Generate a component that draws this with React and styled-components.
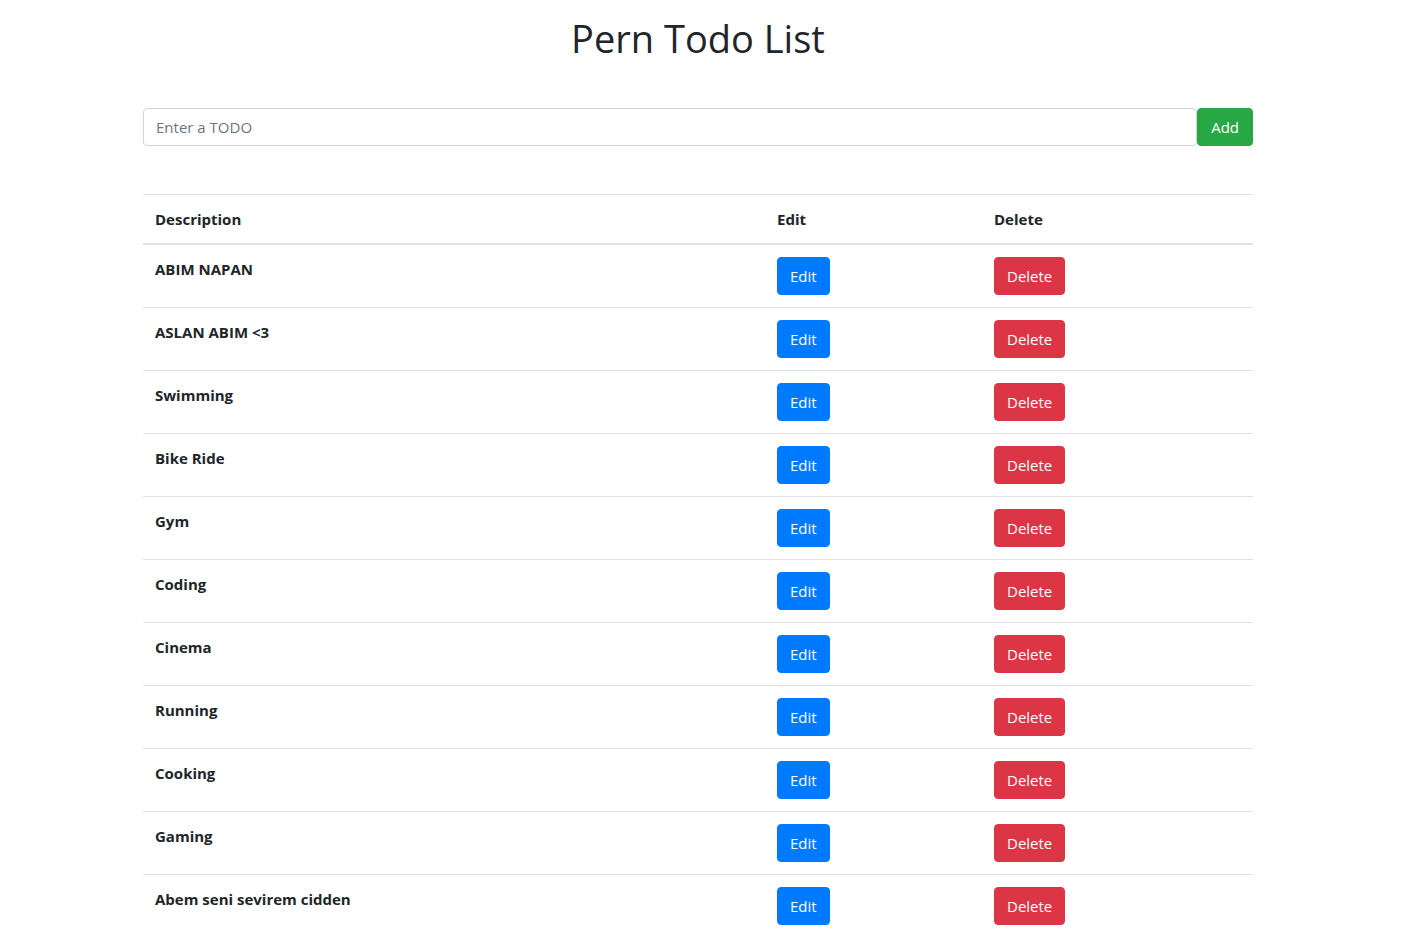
import React from "react";
import styled, { createGlobalStyle } from "styled-components";

const Global = createGlobalStyle`
  html { overflow: hidden; }
  body {
    margin: 0;
    font-family: "Open Sans", "Noto Sans", sans-serif;
    font-size: 15px;
    line-height: 24px;
    color: #212529;
    background: #fff;
  }
  * { box-sizing: border-box; }
`;

const Page = styled.div`
  padding-right: 30px;
`;

const Container = styled.div`
  width: 1110px;
  margin: 0 auto;
`;

const Title = styled.h1`
  margin: 14px 0 0;
  font-size: 38px;
  font-weight: 500;
  line-height: 48px;
  text-align: center;
`;

const Form = styled.form`
  display: flex;
  margin-top: 46px;
`;

const Input = styled.input`
  flex: 1;
  height: 38px;
  padding: 6px 12px;
  font: inherit;
  font-size: 15px;
  color: #495057;
  border: 1px solid #ced4da;
  border-radius: 4px;
  outline: none;
  &::placeholder { color: #6c757d; }
`;

const Button = styled.button`
  height: 38px;
  padding: 6px ${p => p.$px || 12}px;
  font: inherit;
  font-size: 15px;
  line-height: 24px;
  color: #fff;
  background: ${p => p.$bg};
  border: 1px solid ${p => p.$bg};
  border-radius: 4px;
  cursor: pointer;
`;

const Table = styled.table`
  width: 100%;
  margin-top: 48px;
  border-collapse: collapse;
  table-layout: fixed;
`;

const Col = styled.col`
  width: ${p => p.$w}px;
`;

const Th = styled.th`
  padding: 12px;
  text-align: left;
  font-weight: 700;
  border-top: 1px solid #dee2e6;
  border-bottom: 2px solid #dee2e6;
  vertical-align: bottom;
`;

const Td = styled.td`
  padding: 12px;
  vertical-align: top;
  border-top: 1px solid #dee2e6;
  font-weight: ${p => (p.$bold ? 700 : 400)};
`;

const todos = [
  "ABIM NAPAN",
  "ASLAN ABIM <3",
  "Swimming",
  "Bike Ride",
  "Gym",
  "Coding",
  "Cinema",
  "Running",
  "Cooking",
  "Gaming",
  "Abem seni sevirem cidden",
];

export default function App() {
  return (
    <Page>
      <Global />
      <Container>
        <Title>Pern Todo List</Title>
        <Form onSubmit={e => e.preventDefault()}>
          <Input placeholder="Enter a TODO" />
          <Button $bg="#28a745" $px={13}>Add</Button>
        </Form>
        <Table>
          <colgroup>
            <Col $w={622} />
            <Col $w={217} />
            <Col $w={271} />
          </colgroup>
          <thead>
            <tr>
              <Th>Description</Th>
              <Th>Edit</Th>
              <Th>Delete</Th>
            </tr>
          </thead>
          <tbody>
            {todos.map(t => (
              <tr key={t}>
                <Td $bold>{t}</Td>
                <Td><Button $bg="#007bff">Edit</Button></Td>
                <Td><Button $bg="#dc3545">Delete</Button></Td>
              </tr>
            ))}
          </tbody>
        </Table>
      </Container>
    </Page>
  );
}
